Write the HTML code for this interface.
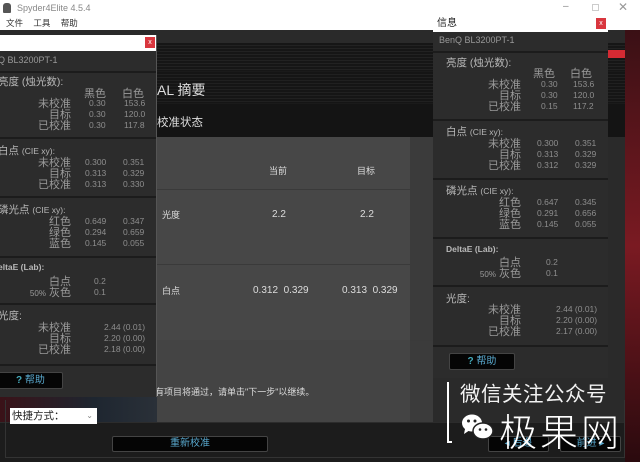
<!DOCTYPE html>
<html><head><meta charset="utf-8">
<style>
*{margin:0;padding:0;box-sizing:border-box}
body{width:640px;height:462px;overflow:hidden;position:relative;background:#1a1a1a;font-family:"Liberation Sans","Noto Sans CJK SC",sans-serif;}
.a{position:absolute;white-space:nowrap}
.dlg{position:absolute;background:#2c2c2c;overflow:hidden}
.dlg .t{position:absolute;left:0;right:0;top:0;height:16px;background:#fff;font-size:10px;color:#222;line-height:16px}
.x{position:absolute;width:10px;height:11px;background:#d9363e;color:#fff;font-size:7px;text-align:center;line-height:11px}
.ln{position:absolute;left:0;right:0;height:2px;background:#1c1c1c}
.h{font-size:10.5px;color:#b8b8b8}
.l{font-size:11px;color:#9a9a9a;text-align:right}
.v{font-size:8.5px;color:#8e8e8e}
.btn{position:absolute;background:#050505;border:1px solid #444;border-radius:2px;color:#5aaad0;font-size:10px;text-align:center}
</style></head><body>
<!-- app title bar -->
<div class="a" style="left:0;top:0;width:640px;height:30px;background:#fff"></div>
<div class="a" style="left:3px;top:3px;width:8px;height:10px;background:#555;border-radius:3px 3px 1px 1px"></div>
<div class="a" style="left:17px;top:3px;font-size:9px;color:#888">Spyder4Elite 4.5.4</div>
<div class="a" style="left:6px;top:17px;font-size:8.5px;color:#333;word-spacing:8px">文件 工具 帮助</div>
<div class="a" style="left:563px;top:1px;font-size:10px;color:#888">–</div>
<div class="a" style="left:592px;top:4px;width:7px;height:7px;border:1px solid #ccc"></div>
<div class="a" style="left:618px;top:0px;font-size:12px;color:#999">✕</div>
<!-- main window stripes -->
<div class="a" style="left:0;top:30px;width:640px;height:13px;background:#2a2a2a"></div>
<div class="a" style="left:0;top:43px;width:625px;height:28px;background:repeating-linear-gradient(#161616 0 2px,#222 2px 3px)"></div>
<div class="a" style="left:600px;top:50px;width:30px;height:8px;background:#d52a33"></div>
<div class="a" style="left:0;top:72px;width:625px;height:31px;background:repeating-linear-gradient(#151515 0 2px,#202020 2px 3px)"></div>
<div class="a" style="left:157px;top:80px;font-size:14px;color:#ddd">AL 摘要</div>
<div class="a" style="left:0;top:104px;width:625px;height:33px;background:#141414"></div>
<div class="a" style="left:157px;top:114px;font-size:11.5px;color:#ddd">校准状态</div>
<div class="a" style="left:625px;top:30px;width:15px;height:432px;background:linear-gradient(#3a1015,#7a1a22 50%,#2a0a0e)"></div>
<!-- table -->
<div class="a" style="left:110px;top:137px;width:515px;height:285px;background:#2a2a2a"></div>
<div class="a" style="left:110px;top:137px;width:300px;height:285px;background:#474747"></div>
<div class="a" style="left:410px;top:137px;width:23px;height:285px;background:#3b3b3b"></div>
<div class="a" style="left:110px;top:189px;width:300px;height:1px;background:#3a3a3a"></div>
<div class="a" style="left:110px;top:264px;width:300px;height:1px;background:#3a3a3a"></div>
<div class="a" style="left:110px;top:340px;width:323px;height:1px;background:#3a3a3a"></div>
<div class="a" style="left:110px;top:340px;width:300px;height:82px;background:#444"></div>
<div class="a" style="left:269px;top:164px;font-size:9px;color:#ddd">当前</div>
<div class="a" style="left:357px;top:164px;font-size:9px;color:#ddd">目标</div>
<div class="a" style="left:162px;top:208px;font-size:9px;color:#ddd">光度</div>
<div class="a" style="left:272px;top:209px;font-size:10px;color:#ddd">2.2</div>
<div class="a" style="left:360px;top:209px;font-size:10px;color:#ddd">2.2</div>
<div class="a" style="left:162px;top:284px;font-size:9px;color:#ddd">白点</div>
<div class="a" style="left:253px;top:285px;font-size:10px;color:#ddd">0.312&nbsp; 0.329</div>
<div class="a" style="left:342px;top:285px;font-size:10px;color:#ddd">0.313&nbsp; 0.329</div>
<div class="a" style="left:155px;top:385px;font-size:9px;color:#ddd">有项目将通过，请单击"下一步"以继续。</div>
<!-- bottom panel -->
<div class="a" style="left:0;top:397px;width:157px;height:25px;background:linear-gradient(90deg,#3a1218,#1e2630 60%,#2a3038)"></div>
<div class="a" style="left:0;top:422px;width:625px;height:40px;background:#1c1c1c;border-top:1px solid #2c2c2c"></div>
<div class="a" style="left:5px;top:400px;width:620px;height:58px;border:1px solid #333;border-top:none"></div>
<div class="a" style="left:10px;top:408px;width:87px;height:16px;background:#fff;font-size:10.5px;color:#222;padding-left:2px;line-height:16px">快捷方式：<span style="position:absolute;right:4px;color:#888;font-size:8px">⌄</span></div>
<div class="btn" style="left:112px;top:436px;width:156px;height:16px;line-height:14px">重新校准</div>
<div class="btn" style="left:488px;top:436px;width:61px;height:16px;line-height:14px">◂ 后退</div>
<div class="btn" style="left:560px;top:436px;width:61px;height:16px;line-height:14px">前进 ▸</div>

<!-- left dialog -->
<div class="dlg" style="left:0;top:35px;width:157px;height:362px;border-right:1px solid #555">
<div class="t">&nbsp;</div><div class="x" style="left:145px;top:2px">x</div>
<div class="a v" style="left:-2px;top:20px;font-size:9px;color:#999">Q BL3200PT-1</div>
<div class="ln" style="top:36px"></div>
<div class="a h" style="left:-2px;top:39px">亮度 (烛光数):</div>
<div class="a l" style="left:84px;top:50px">黑色</div><div class="a l" style="left:122px;top:50px">白色</div>
<div class="a l" style="right:85px;top:60px">未校准</div><div class="a v" style="left:89px;top:63px">0.30</div><div class="a v" style="left:124px;top:63px">153.6</div>
<div class="a l" style="right:85px;top:71px">目标</div><div class="a v" style="left:89px;top:74px">0.30</div><div class="a v" style="left:124px;top:74px">120.0</div>
<div class="a l" style="right:85px;top:82px">已校准</div><div class="a v" style="left:89px;top:85px">0.30</div><div class="a v" style="left:124px;top:85px">117.8</div>
<div class="ln" style="top:102px"></div>
<div class="a h" style="left:-2px;top:108px">白点 <span style="font-size:8.5px">(CIE xy):</span></div>
<div class="a l" style="right:85px;top:119px">未校准</div><div class="a v" style="left:85px;top:122px">0.300</div><div class="a v" style="left:123px;top:122px">0.351</div>
<div class="a l" style="right:85px;top:130px">目标</div><div class="a v" style="left:85px;top:133px">0.313</div><div class="a v" style="left:123px;top:133px">0.329</div>
<div class="a l" style="right:85px;top:141px">已校准</div><div class="a v" style="left:85px;top:144px">0.313</div><div class="a v" style="left:123px;top:144px">0.330</div>
<div class="ln" style="top:161px"></div>
<div class="a h" style="left:-2px;top:167px">磷光点 <span style="font-size:8.5px">(CIE xy):</span></div>
<div class="a l" style="right:85px;top:178px">红色</div><div class="a v" style="left:85px;top:181px">0.649</div><div class="a v" style="left:123px;top:181px">0.347</div>
<div class="a l" style="right:85px;top:189px">绿色</div><div class="a v" style="left:85px;top:192px">0.294</div><div class="a v" style="left:123px;top:192px">0.659</div>
<div class="a l" style="right:85px;top:200px">蓝色</div><div class="a v" style="left:85px;top:203px">0.145</div><div class="a v" style="left:123px;top:203px">0.055</div>
<div class="ln" style="top:221px"></div>
<div class="a h" style="left:-2px;top:227px;font-size:8.5px;font-weight:bold">eltaE (Lab):</div>
<div class="a l" style="right:85px;top:238px">白点</div><div class="a v" style="left:94px;top:241px">0.2</div>
<div class="a l" style="right:85px;top:249px"><span style="font-size:8px">50%</span> 灰色</div><div class="a v" style="left:94px;top:252px">0.1</div>
<div class="ln" style="top:268px"></div>
<div class="a h" style="left:-2px;top:273px">光度:</div>
<div class="a l" style="right:85px;top:284px">未校准</div><div class="a v" style="left:104px;top:287px">2.44 (0.01)</div>
<div class="a l" style="right:85px;top:295px">目标</div><div class="a v" style="left:104px;top:298px">2.20 (0.00)</div>
<div class="a l" style="right:85px;top:306px">已校准</div><div class="a v" style="left:104px;top:309px">2.18 (0.00)</div>
<div class="ln" style="top:329px"></div>
<div class="btn" style="left:-2px;top:337px;width:65px;height:17px;line-height:15px"><b style="color:#4ab">?</b> 帮助</div>
</div>

<!-- right dialog -->
<div class="dlg" style="left:433px;top:15px;width:175px;height:363px">
<div class="t" style="height:17px;line-height:17px;padding-left:4px">信息</div><div class="x" style="left:163px;top:3px">x</div>
<div class="a v" style="left:6px;top:20px;font-size:9px;color:#999">BenQ BL3200PT-1</div>
<div class="ln" style="top:36px"></div>
<div class="a h" style="left:13px;top:40px">亮度 (烛光数):</div>
<div class="a l" style="left:100px;top:50px">黑色</div><div class="a l" style="left:137px;top:50px">白色</div>
<div class="a l" style="right:87px;top:61px">未校准</div><div class="a v" style="left:108px;top:64px">0.30</div><div class="a v" style="left:140px;top:64px">153.6</div>
<div class="a l" style="right:87px;top:72px">目标</div><div class="a v" style="left:108px;top:75px">0.30</div><div class="a v" style="left:140px;top:75px">120.0</div>
<div class="a l" style="right:87px;top:83px">已校准</div><div class="a v" style="left:108px;top:86px">0.15</div><div class="a v" style="left:140px;top:86px">117.2</div>
<div class="ln" style="top:104px"></div>
<div class="a h" style="left:13px;top:109px">白点 <span style="font-size:8.5px">(CIE xy):</span></div>
<div class="a l" style="right:87px;top:120px">未校准</div><div class="a v" style="left:104px;top:123px">0.300</div><div class="a v" style="left:142px;top:123px">0.351</div>
<div class="a l" style="right:87px;top:131px">目标</div><div class="a v" style="left:104px;top:134px">0.313</div><div class="a v" style="left:142px;top:134px">0.329</div>
<div class="a l" style="right:87px;top:142px">已校准</div><div class="a v" style="left:104px;top:145px">0.312</div><div class="a v" style="left:142px;top:145px">0.329</div>
<div class="ln" style="top:163px"></div>
<div class="a h" style="left:13px;top:168px">磷光点 <span style="font-size:8.5px">(CIE xy):</span></div>
<div class="a l" style="right:87px;top:179px">红色</div><div class="a v" style="left:104px;top:182px">0.647</div><div class="a v" style="left:142px;top:182px">0.345</div>
<div class="a l" style="right:87px;top:190px">绿色</div><div class="a v" style="left:104px;top:193px">0.291</div><div class="a v" style="left:142px;top:193px">0.656</div>
<div class="a l" style="right:87px;top:201px">蓝色</div><div class="a v" style="left:104px;top:204px">0.145</div><div class="a v" style="left:142px;top:204px">0.055</div>
<div class="ln" style="top:222px"></div>
<div class="a h" style="left:13px;top:229px;font-size:8.5px;font-weight:bold">DeltaE (Lab):</div>
<div class="a l" style="right:87px;top:239px">白点</div><div class="a v" style="left:113px;top:242px">0.2</div>
<div class="a l" style="right:87px;top:250px"><span style="font-size:8px">50%</span> 灰色</div><div class="a v" style="left:113px;top:253px">0.1</div>
<div class="ln" style="top:270px"></div>
<div class="a h" style="left:13px;top:276px">光度:</div>
<div class="a l" style="right:87px;top:286px">未校准</div><div class="a v" style="left:123px;top:289px">2.44 (0.01)</div>
<div class="a l" style="right:87px;top:297px">目标</div><div class="a v" style="left:123px;top:300px">2.20 (0.00)</div>
<div class="a l" style="right:87px;top:308px">已校准</div><div class="a v" style="left:123px;top:311px">2.17 (0.00)</div>
<div class="ln" style="top:330px"></div>
<div class="btn" style="left:16px;top:338px;width:66px;height:17px;line-height:15px"><b style="color:#4ab">?</b> 帮助</div>
</div>

<!-- watermark -->
<div class="a" style="left:447px;top:382px;width:2px;height:61px;background:#fff"></div>
<div class="a" style="left:447px;top:441px;width:5px;height:2px;background:#fff"></div>
<div class="a" style="left:460px;top:377px;font-size:20.5px;color:#f2f2f2;letter-spacing:0.5px">微信关注公众号</div>
<svg class="a" style="left:461px;top:414px" width="34" height="26" viewBox="0 0 34 26">
<ellipse cx="11" cy="9" rx="10" ry="8.5" fill="#fff"/><path d="M4 15 L3 20 L9 16Z" fill="#fff"/>
<circle cx="7.5" cy="7" r="1.5" fill="#222"/><circle cx="14" cy="7" r="1.5" fill="#222"/>
<ellipse cx="22" cy="17" rx="10" ry="8" fill="#fff" stroke="#222" stroke-width="1.5"/>
<circle cx="19" cy="15.5" r="1.3" fill="#222"/><circle cx="25" cy="15.5" r="1.3" fill="#222"/>
</svg>
<div class="a" style="left:499px;top:402px;font-size:38px;color:#fff;letter-spacing:3px;font-weight:300">极果网</div>
</body></html>
